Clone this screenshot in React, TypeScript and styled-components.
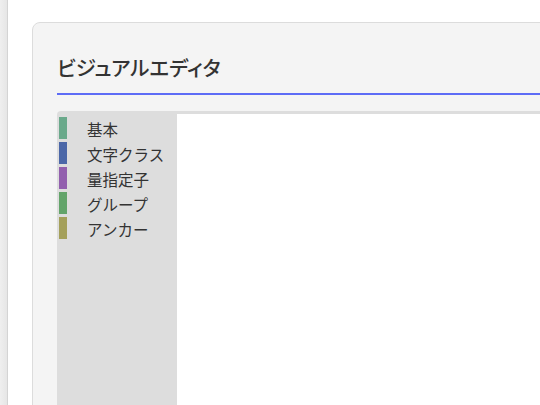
import styled, { createGlobalStyle } from 'styled-components'

const GlobalStyle = createGlobalStyle`
  html, body {
    margin: 0;
    padding: 0;
    height: 100%;
    overflow: hidden;
    background: #ffffff;
  }
  body {
    font-family: "Noto Sans CJK JP", "Noto Sans", sans-serif;
    color: #333333;
  }
`

const categories = [
  { label: '基本', color: '#6aa98b' },
  { label: '文字クラス', color: '#4b67a8' },
  { label: '量指定子', color: '#925fae' },
  { label: 'グループ', color: '#63a46a' },
  { label: 'アンカー', color: '#a4a05a' },
]

const App = () => {
  return (
    <Page>
      <GlobalStyle />
      <SideStrip />
      <Main>
        <Card>
          <Title>ビジュアルエディタ</Title>
          <Editor>
            <Palette>
              {categories.map((c) => (
                <Category key={c.label}>
                  <Swatch $color={c.color} />
                  <CategoryText>{c.label}</CategoryText>
                </Category>
              ))}
            </Palette>
            <Workspace />
          </Editor>
        </Card>
      </Main>
    </Page>
  )
}

export default App

const Page = styled.div`
  display: flex;
  height: 405px;
  overflow: hidden;
`

const SideStrip = styled.div`
  width: 7px;
  flex-shrink: 0;
  background: linear-gradient(to right, #efefef, #e6e6e6);
  border-right: 1px solid #d4d4d4;
`

const Main = styled.div`
  flex: 1;
  padding: 22px 0 0 24px;
  min-width: 0;
`

const Card = styled.div`
  width: 700px;
  min-height: 500px;
  box-sizing: border-box;
  background: #f4f4f4;
  border: 1px solid #dcdcdc;
  border-radius: 8px 0 0 0;
  padding: 24px 0 0 24px;
`

const Title = styled.h2`
  margin: 0;
  font-size: 20.5px;
  font-weight: 500;
  line-height: 40px;
  padding-bottom: 6px;
  border-bottom: 2px solid #5d6cf6;
  font-feature-settings: 'palt';
  color: #333333;
`

const Editor = styled.div`
  display: flex;
  margin-top: 16px;
  padding-top: 3px;
  background: #dddddd;
  border-radius: 4px 0 0 0;
  min-height: 400px;
`

const Palette = styled.div`
  width: 120px;
  flex-shrink: 0;
  padding-top: 3px;
`

const Category = styled.div`
  display: flex;
  align-items: center;
  height: 22px;
  margin-bottom: 3px;
`

const Swatch = styled.div<{ $color: string }>`
  width: 8px;
  height: 22px;
  margin-left: 2px;
  background: ${(p) => p.$color};
`

const CategoryText = styled.span`
  margin-left: 20px;
  padding-top: 3px;
  font-size: 15.5px;
  line-height: 19px;
  color: #333333;
`

const Workspace = styled.div`
  flex: 1;
  background: #ffffff;
`
